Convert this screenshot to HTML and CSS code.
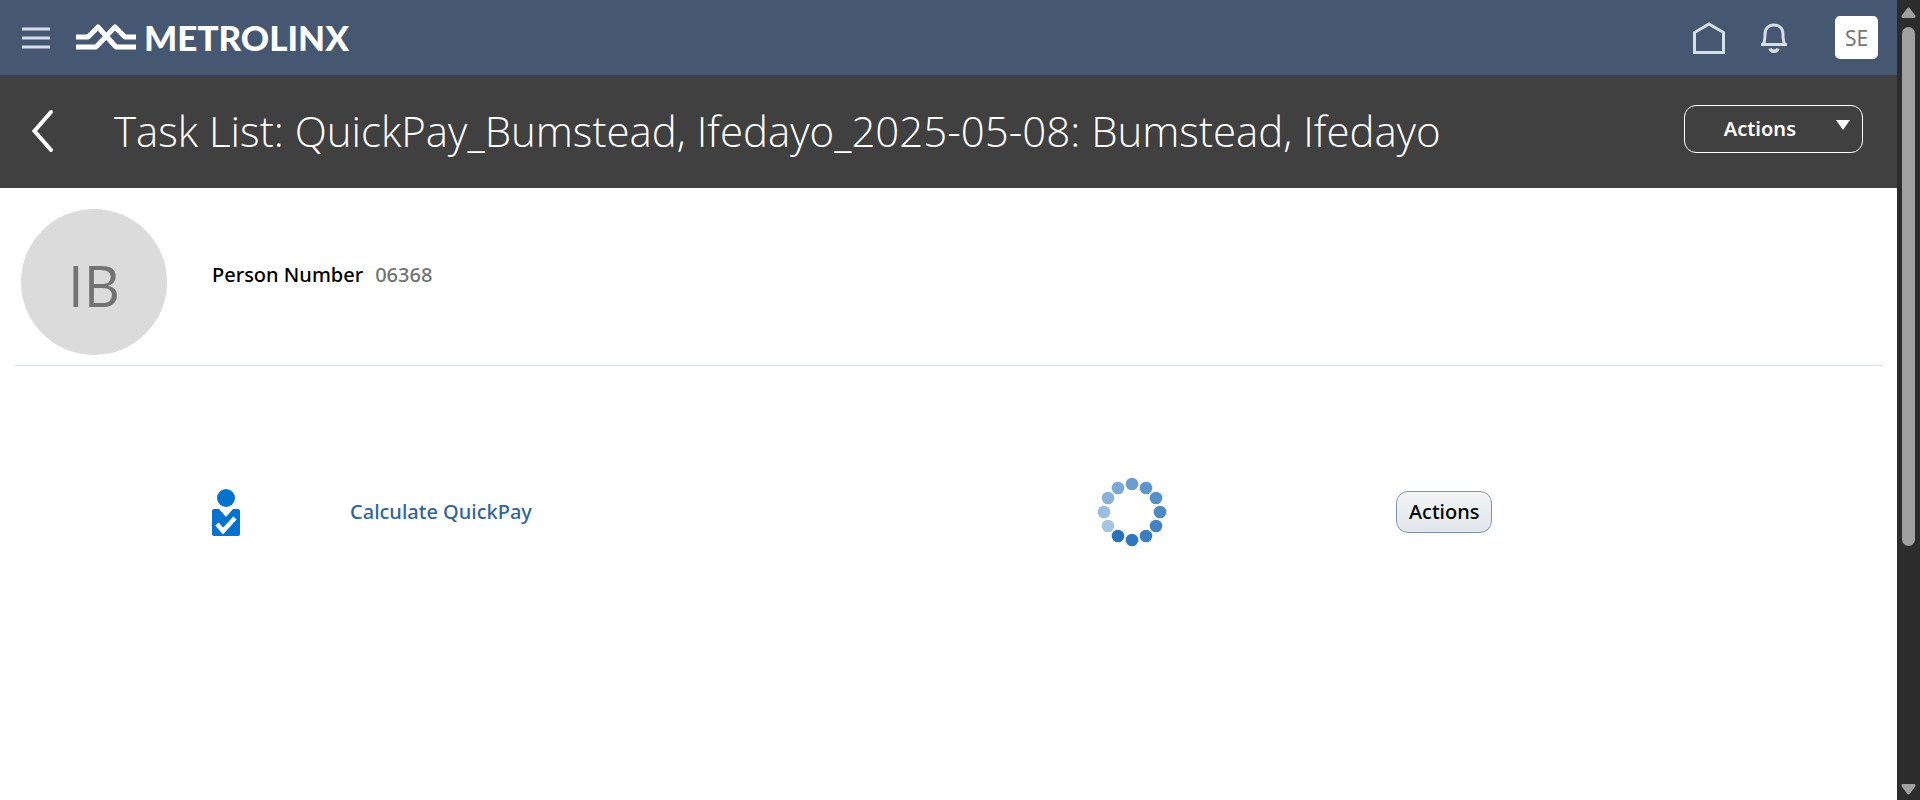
FILE: index.html
```html
<!DOCTYPE html>
<html lang="en">
<head>
<meta charset="utf-8">
<title>Task List</title>
<link rel="stylesheet" href="styles.css">
</head>
<body>
<div class="page">
  <header class="topbar">
    <button class="icon-button menu" type="button" aria-label="Menu">
      <svg width="28" height="22" viewBox="0 0 28 22"><path d="M0 2h28M0 11h28M0 20h28" stroke="#d5dfeb" stroke-width="3"/></svg>
    </button>
    <a class="brand" href="#">
      <svg width="60" height="26" viewBox="0 0 60 26" fill="none" stroke="#fff" stroke-width="5" stroke-linejoin="round"><path d="M0 13h12L22 3l18 20h20"/><path d="M0 23h20L39 3l10 10h11"/></svg>
      <span class="brand-name">METROLINX</span>
    </a>
    <nav class="tools" aria-label="Global">
      <a class="tool" href="#" aria-label="Home">
        <svg width="32" height="32" viewBox="0 0 32 32"><path d="M1.500 30.500V10.500L16 2l14.500 8.500v20z" fill="none" stroke="#d5dfeb" stroke-width="3"/></svg>
      </a>
      <button class="icon-button bell" type="button" aria-label="Notifications">
        <svg width="26" height="30" viewBox="0 0 26 30" fill="none" stroke="#d5dfeb" stroke-width="3"><path d="M1.500 22.500C3.500 20 4 17.500 4 11.500C4 5.500 7.500 2 13 2s9 3.500 9 9.500c0 6 .5 8.500 2.500 11"/><path d="M0 21.500h26"/><path d="M9 25.500c1 3.500 7 3.500 8 0" stroke-width="3.500"/></svg>
      </button>
      <button class="user" type="button">SE</button>
    </nav>
  </header>

  <div class="titlebar">
    <button class="icon-button back" type="button" aria-label="Back">
      <svg width="22" height="42" viewBox="0 0 22 42"><path d="M19 2L2.500 21 19 40" fill="none" stroke="#fff" stroke-width="4" stroke-linecap="round"/></svg>
    </button>
    <h1 class="title">Task List: QuickPay_Bumstead, Ifedayo_2025-05-08: Bumstead, Ifedayo</h1>
    <button class="page-actions" type="button">
      <span class="page-actions-label">Actions</span>
      <svg class="caret" width="14" height="10" viewBox="0 0 14 10"><path d="M0 0h14L7 10z" fill="#fff"/></svg>
    </button>
  </div>

  <main class="content">
    <section class="person">
      <div class="avatar">IB</div>
      <dl class="person-number">
        <dt>Person Number</dt>
        <dd>06368</dd>
      </dl>
    </section>
    <section class="task">
      <svg class="task-icon" width="28" height="47" viewBox="0 0 28 47"><circle cx="14" cy="9" r="9" fill="#0572ce"/><path d="M2 20h5l7 8 7-8h5q2 0 2 2v23q0 2-2 2H2q-2 0-2-2V22q0-2 2-2z" fill="#0572ce"/><path d="M5 35l6 7L23 29" fill="none" stroke="#fff" stroke-width="4.500"/></svg>
      <a class="task-name" href="#">Calculate QuickPay</a>
      <svg class="spinner" width="70" height="70" viewBox="-35 -35 70 70" role="img" aria-label="In progress">
        <circle cy="-28" r="6.300" fill="#6b9dd0"/>
        <circle cx="14" cy="-24" r="6.300" fill="#5e95cb"/>
        <circle cx="24" cy="-14" r="6.300" fill="#5690c8"/>
        <circle cx="28" r="6.300" fill="#4c89c5"/>
        <circle cx="24" cy="14" r="6.300" fill="#4482c1"/>
        <circle cx="14" cy="24" r="6.300" fill="#3b7dbf"/>
        <circle cy="28" r="6.300" fill="#3277bd"/>
        <circle cx="-14" cy="24" r="6.300" fill="#2971b9"/>
        <circle cx="-24" cy="14" r="6.300" fill="#a6c5e1"/>
        <circle cx="-28" r="6.300" fill="#9bbddf"/>
        <circle cx="-24" cy="-14" r="6.300" fill="#8ab1d9"/>
        <circle cx="-14" cy="-24" r="6.300" fill="#7ba8d5"/>
      </svg>
      <button class="task-actions" type="button">Actions</button>
    </section>
  </main>
</div>
<div class="scrollbar" aria-hidden="true">
  <svg width="15" height="11" viewBox="0 0 15 11"><path d="M6 1.500Q7.500-.5 9 1.500L14.300 8.500Q15 11 13 11H2Q0 11 .7 8.500z" fill="#a0a0a0"/></svg>
  <div class="track"><div class="thumb"></div></div>
  <svg width="15" height="11" viewBox="0 0 15 11"><path d="M6 9.500Q7.500 11.500 9 9.500L14.300 2.500Q15 0 13 0H2Q0 0 .7 2.500z" fill="#a0a0a0"/></svg>
</div>
</body>
</html>
```
FILE: styles.css
```css
* {
  box-sizing: border-box;
}

body {
  display: flex;
  min-height: 100vh;
  margin: 0;
  background: #fff;
  color: #000;
  font: 500 20px/28px "Noto Sans", sans-serif;
}

svg {
  display: block;
  flex: none;
}

button {
  font: inherit;
}

.page {
  flex: 1;
  min-width: 0;
}

.icon-button {
  padding: 0;
  border: 0;
  background: none;
}

.topbar {
  display: flex;
  align-items: center;
  height: 75px;
  padding: 0 19px 0 22px;
  background: #465772;
}

.brand {
  display: flex;
  align-items: center;
  gap: 8px;
  margin-left: 26px;
  padding-bottom: 2px;
  color: #fff;
  text-decoration: none;
}

.brand-name {
  font: 900 35px/40px Lato, sans-serif;
}

.tools {
  display: flex;
  align-items: center;
  gap: 36px;
  margin-left: auto;
}

.user {
  width: 43px;
  height: 43px;
  margin-left: 12px;
  padding: 0;
  border: 0;
  border-radius: 5px;
  background: #fff;
  color: #767676;
  font-weight: 400;
  font-size: 21px;
}

.titlebar {
  display: flex;
  align-items: center;
  min-height: 113px;
  padding: 0 34px 2px 32px;
  background: #404040;
  color: #fff;
}

.title {
  flex: 1;
  margin: 0 0 0 60px;
  font: 300 42px/60px "Open Sans", sans-serif;
}

.page-actions {
  display: flex;
  justify-content: flex-end;
  width: 179px;
  height: 48px;
  margin-bottom: 4px;
  padding: 9px 12px;
  border: 1px solid #fff;
  border-radius: 12px;
  background: none;
  color: #fff;
}

.page-actions-label {
  margin-right: 40px;
  font-weight: 600;
}

.caret {
  margin-top: 5px;
}

.content {
  padding: 15px;
}

.person {
  display: flex;
  align-items: flex-start;
  gap: 45px;
  padding: 6px 6px 10px;
  border-bottom: 1px solid #d6dfe6;
}

.avatar {
  width: 146px;
  height: 146px;
  border-radius: 50%;
  background: #dbdbdb;
  color: #737373;
  font: 400 56px/152px "Open Sans", sans-serif;
  text-align: center;
}

.person-number {
  display: flex;
  gap: 12px;
  margin: 52px 0 0;
}

.person-number dd {
  margin: 0;
  color: #737373;
}

.task {
  display: grid;
  grid-template-columns: 138px 747fr 299px 486fr;
  align-items: center;
  padding: 111px 0 0 197px;
}

.task-name {
  color: #30659b;
  text-decoration: none;
}

.task-actions {
  justify-self: start;
  height: 42px;
  padding: 0 12px;
  border: 1px solid #7b95ad;
  border-radius: 12px;
  background: linear-gradient(#f2f4f5, #e2e6ea);
  color: #000;
}

.scrollbar {
  position: sticky;
  top: 0;
  display: flex;
  flex-direction: column;
  align-items: center;
  width: 23px;
  height: 100vh;
  padding: 7px 0 5px;
  background: #2c2c2c;
}

.track {
  flex: 1;
  padding: 9px 0 15px;
}

.thumb {
  width: 13px;
  height: 70%;
  border-radius: 7px;
  background: #a0a0a0;
}
```
